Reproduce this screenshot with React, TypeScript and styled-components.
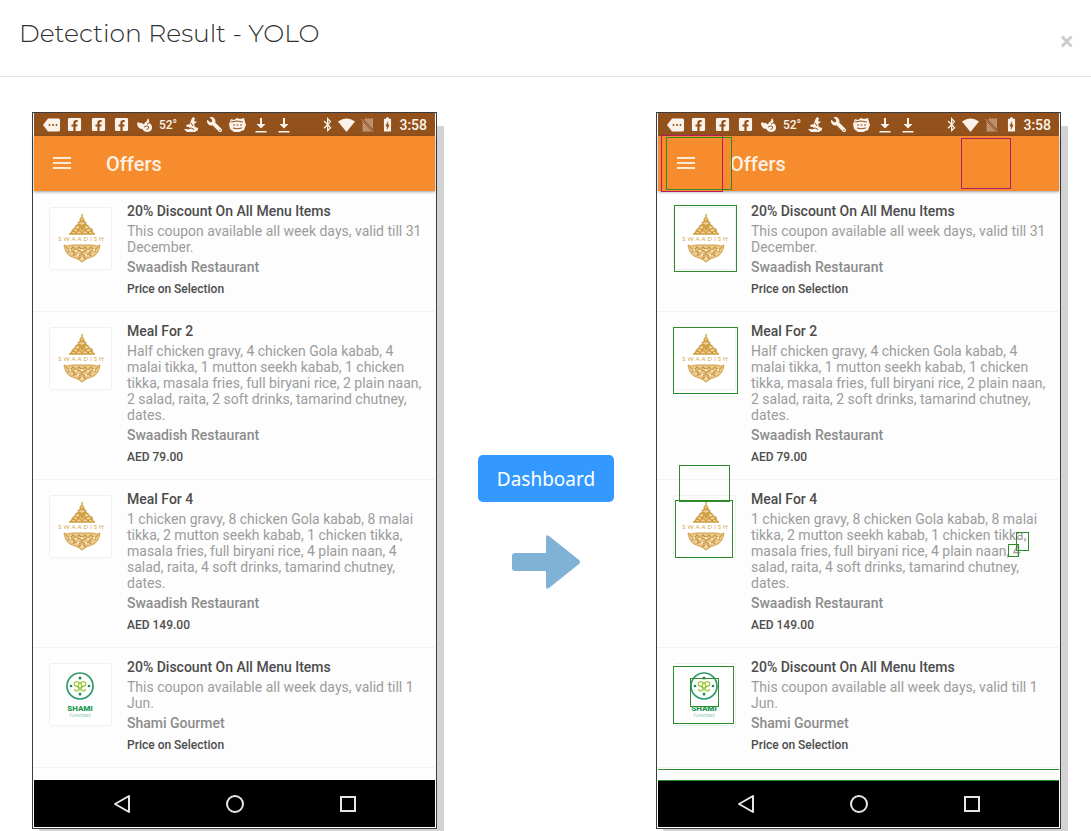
import React from "react";
import styled, { createGlobalStyle } from "styled-components";
import { FaBluetoothB, FaFacebookSquare, FaWrench } from "react-icons/fa";
import { MdBatteryChargingFull } from "react-icons/md";

const GlobalStyle = createGlobalStyle`
  *, *::before, *::after { box-sizing: border-box; }
  body { margin: 0; background: #fff; }
  h1, h2, h3, p, ul { margin: 0; padding: 0; }
`;

const Page = styled.div`
  min-height: 100vh;
  background: #fff;
`;

const DialogHeader = styled.header`
  display: flex;
  justify-content: space-between;
  align-items: flex-start;
  padding: 16px 17px 0 19px;
  height: 77px;
  border-bottom: 1px solid #e5e5e5;
`;

const DialogTitle = styled.h1`
  font: 300 25px/35px Montserrat, Inter, sans-serif;
  color: #303030;
`;

const CloseButton = styled.button`
  margin-top: 14px;
  padding: 0;
  border: 0;
  background: none;
  font: 700 26px/22px "Open Sans", sans-serif;
  color: #cccccc;
  cursor: pointer;
`;

const Comparison = styled.main`
  display: grid;
  grid-template-columns: minmax(0, 405px) minmax(137px, 1fr) minmax(0, 405px);
  align-items: start;
  padding: 35px 30px 0 32px;
`;

const Middle = styled.div`
  display: flex;
  flex-direction: column;
  align-items: center;
  gap: 33px;
  padding: 343px 1px 0 0;
`;

const DashboardButton = styled.button`
  height: 47px;
  padding: 0 19px;
  border: 0;
  border-radius: 5px;
  background: #3399ff;
  color: #fff;
  font: 400 19px/28px "Noto Sans", "Open Sans", sans-serif;
  cursor: pointer;
`;

const Frame = styled.section`
  padding: 0 1px 1px;
  border: 1px solid #3c3c3c;
  background: #fff;
  box-shadow: 7px 14px 0 #d3d3d3;
  font-family: Roboto, sans-serif;
`;

const Screen = styled.div`
  position: relative;
  background: #fdfdfd;
`;

const StatusBar = styled.div`
  display: flex;
  justify-content: space-between;
  align-items: center;
  height: 23px;
  padding: 0 8px 0 6px;
  background: #93521c;
  color: #fbf3ea;
  svg { display: block; flex: none; }
`;

const Notifications = styled.div`
  display: grid;
  grid-template-columns: repeat(11, 1fr);
  place-items: center;
  flex: 0 1 256px;
`;

const StatusText = styled.span`
  font-size: 12px;
  font-weight: 500;
  line-height: 16px;
`;

const SystemIcons = styled.div`
  display: flex;
  align-items: center;
  gap: 3px;
`;

const Clock = styled.span`
  font-size: 14px;
  font-weight: 500;
  line-height: 16px;
`;

const AppBar = styled.div`
  position: relative;
  display: flex;
  align-items: center;
  gap: 35px;
  height: 55px;
  padding: 0 19px;
  background: #f68c2e;
  box-shadow: 0 1px 3px rgba(0, 0, 0, 0.35);
`;

const MenuButton = styled.button`
  display: block;
  padding: 0;
  border: 0;
  background: none;
  svg { display: block; }
`;

const AppTitle = styled.h2`
  font-size: 20px;
  font-weight: 500;
  line-height: 24px;
  color: #fdf0e2;
`;

const OfferList = styled.ul`
  list-style: none;
  padding-bottom: 12px;
`;

const OfferRow = styled.li`
  display: flex;
  align-items: flex-start;
  gap: 15px;
  padding: 11px 8px 14px 15px;
  border-top: 1px solid #f2f2f2;
  &:last-child { border-bottom: 1px solid #f2f2f2; }
`;

const Thumb = styled.div`
  flex: none;
  width: 63px;
  height: 63px;
  margin-top: 4px;
  border: 1px solid #f0f0f0;
  border-radius: 3px;
  background: #fff;
  svg { display: block; }
`;

const OfferText = styled.div`
  min-width: 0;
`;

const OfferTitle = styled.h3`
  font-size: 14px;
  font-weight: 500;
  line-height: 16px;
  color: #4c4c4c;
`;

const Description = styled.p`
  margin: 4px 0;
  font-size: 14px;
  line-height: 16px;
  color: #9c9c9c;
`;

const Restaurant = styled.p`
  font-size: 14px;
  font-weight: 500;
  line-height: 16px;
  color: #8c8c8c;
`;

const Price = styled.p`
  margin-top: 6px;
  font-size: 12px;
  font-weight: 500;
  line-height: 16px;
  color: #4c4c4c;
`;

const NavBar = styled.div`
  display: flex;
  justify-content: center;
  height: 47px;
  background: #000;
`;

const NavButton = styled.button`
  display: flex;
  align-items: center;
  justify-content: center;
  flex: 0 1 113px;
  padding: 0;
  border: 0;
  background: none;
  svg { display: block; }
`;

const boxColors = { green: "#2f8a2a", magenta: "#b51a62" };

const DetectionBox = styled.div<{
  $x: number;
  $y: number;
  $w: number;
  $h: number;
  $kind: keyof typeof boxColors;
}>`
  position: absolute;
  left: ${(p) => p.$x}px;
  top: ${(p) => p.$y}px;
  width: ${(p) => p.$w}px;
  height: ${(p) => p.$h}px;
  border: 1px solid ${(p) => boxColors[p.$kind]};
`;

const DetectionLine = styled.div<{ $y: number }>`
  position: absolute;
  left: 0;
  right: 0;
  top: ${(p) => p.$y}px;
  height: 1px;
  background: ${boxColors.green};
`;

type Logo = "swaadish" | "shami";

interface Offer {
  title: string;
  description: string;
  restaurant: string;
  price: string;
  logo: Logo;
}

const offers: Offer[] = [
  {
    title: "20% Discount On All Menu Items",
    description: "This coupon available all week days, valid till 31 December.",
    restaurant: "Swaadish Restaurant",
    price: "Price on Selection",
    logo: "swaadish",
  },
  {
    title: "Meal For 2",
    description:
      "Half chicken gravy, 4 chicken Gola kabab, 4 malai tikka, 1 mutton seekh kabab, 1 chicken tikka, masala fries, full biryani rice, 2 plain naan, 2 salad, raita, 2 soft drinks, tamarind chutney, dates.",
    restaurant: "Swaadish Restaurant",
    price: "AED 79.00",
    logo: "swaadish",
  },
  {
    title: "Meal For 4",
    description:
      "1 chicken gravy, 8 chicken Gola kabab, 8 malai tikka, 2 mutton seekh kabab, 1 chicken tikka, masala fries, full biryani rice, 4 plain naan, 4 salad, raita, 4 soft drinks, tamarind chutney, dates.",
    restaurant: "Swaadish Restaurant",
    price: "AED 149.00",
    logo: "swaadish",
  },
  {
    title: "20% Discount On All Menu Items",
    description: "This coupon available all week days, valid till 1 Jun.",
    restaurant: "Shami Gourmet",
    price: "Price on Selection",
    logo: "shami",
  },
];

const detections: { x: number; y: number; w: number; h: number; kind: keyof typeof boxColors }[] = [
  { x: 3, y: 22, w: 62, h: 57, kind: "magenta" },
  { x: 8, y: 24, w: 66, h: 53, kind: "green" },
  { x: 303, y: 25, w: 50, h: 51, kind: "magenta" },
  { x: 16, y: 92, w: 63, h: 67, kind: "green" },
  { x: 15, y: 214, w: 65, h: 67, kind: "green" },
  { x: 21, y: 352, w: 51, h: 37, kind: "green" },
  { x: 17, y: 387, w: 58, h: 58, kind: "green" },
  { x: 358, y: 419, w: 13, h: 19, kind: "green" },
  { x: 350, y: 431, w: 11, h: 13, kind: "green" },
  { x: 15, y: 553, w: 61, h: 58, kind: "green" },
  { x: 32, y: 565, w: 29, h: 29, kind: "green" },
];

const SwaadishLogo = () => (
  <svg width="61" height="61" viewBox="0 0 61 61" aria-label="Swaadish">
    <path d="M32 9l3 6l5 5l5 6H19l5-6l5-5z" fill="#eed3a2" />
    <g fill="none" stroke="#cf9c3c" strokeWidth="1.3">
      <path d="M32 6v4M30 12q2-5 4 0q-2 4-4 0" />
      <path d="M28 15q4-4 8 0q-4 5-8 0M25 19q3-4 7 0q4-4 7 0M22 23q3-5 6-1q4-5 8 0q4-4 7 1" />
      <path d="M19 26h26M21 25q3-4 5 0q3-5 6 0q3-5 6 0q3-4 5 0M29 18l3 4l3-4" />
    </g>
    <path
      d="M14 37q1 8 6 11q5 2 8 3q2 2 4 3q2-1 4-3q3-1 8-3q5-3 6-11q-4 2-7 0H21q-4 2-7 0z"
      fill="#e9c88f"
      stroke="#d3a349"
    />
    <g fill="none" stroke="#c58c2c" strokeWidth="1.1">
      <path d="M16 39q4 5 7 0q3 5 6 0q3 4 6 0q3 5 6 0q3 5 7 0M18 44q4-4 6 1q4-5 8 0q4-5 8 0q3-5 6-1M23 48q3-4 6 0q3-3 6 0q3-4 6 0M28 51q4-4 8 0" />
    </g>
    <g fill="#fffaf0">
      <circle cx="20" cy="42" r="1" />
      <circle cx="26" cy="43" r="1" />
      <circle cx="32" cy="42" r="1" />
      <circle cx="38" cy="43" r="1" />
      <circle cx="44" cy="42" r="1" />
      <circle cx="28" cy="47" r="1" />
      <circle cx="36" cy="47" r="1" />
      <circle cx="32" cy="50" r="1" />
    </g>
    <text
      x="32"
      y="33"
      textAnchor="middle"
      fill="#cfa050"
      fontFamily="Lato, sans-serif"
      fontSize="6"
      letterSpacing="2"
    >
      SWAADISH
    </text>
  </svg>
);

const ShamiLogo = () => (
  <svg width="61" height="61" viewBox="0 0 61 61" aria-label="Shami Gourmet">
    <circle cx="30" cy="22" r="13" fill="#fff" stroke="#2f9a6a" strokeWidth="1.7" />
    <g fill="none" stroke="#9bc93f" strokeWidth="1.4" strokeLinecap="round">
      <path d="M29 18.500q-3.500-2-4.500 .5t2.500 3.500t1.500 3.500t-4-.5" />
      <path d="M31 18.500q3.500-2 4.500 .5t-2.500 3.500t-1.500 3.500t4-.5" />
      <path d="M30 18.500q-3.500 3.500 0 7q3.500-3.500 0-7" />
    </g>
    <g fill="#1f8a5a">
      <circle cx="30" cy="14" r="1.500" />
      <circle cx="30" cy="30" r="1.500" />
      <circle cx="21" cy="22" r="1.300" />
      <circle cx="39" cy="22" r="1.300" />
    </g>
    <text
      x="30"
      y="47"
      textAnchor="middle"
      fill="#249a57"
      fontFamily="Roboto, sans-serif"
      fontWeight="900"
      fontSize="8"
    >
      SHAMI
    </text>
    <text
      x="30"
      y="53"
      textAnchor="middle"
      fill="#7cc29c"
      fontFamily="'Liberation Serif', serif"
      fontStyle="italic"
      fontSize="6"
    >
      Gourmet
    </text>
  </svg>
);

const MessageIcon = () => (
  <svg width="17" height="14" viewBox="0 0 17 14">
    <path d="M5 0.5h10.5q1.5 0 1.5 1.5v10q0 1.5-1.5 1.5H5L0 7z" fill="currentColor" />
    <g fill="#93521c">
      <circle cx="6.5" cy="7" r="1" />
      <circle cx="10" cy="7" r="1" />
      <circle cx="13.5" cy="7" r="1" />
    </g>
  </svg>
);

const BirdIcon = () => (
  <svg width="15" height="14" viewBox="0 0 15 14">
    <path
      d="M0 5q2-1.500 3 .5q1-1.500 2.500 0l1.500 1q0-2 3-3.500l1-3q2 2 1 5q3 1 3 4.500q0 4-4.500 4.500q-4 0-5-3q-5 0-5.500-6z"
      fill="currentColor"
    />
    <path d="M7 9q3-2 4.500-.5t-2 3M10 6l2-1" stroke="#93521c" fill="none" />
  </svg>
);

const SkierIcon = () => (
  <svg width="15" height="15" viewBox="0 0 15 15">
    <path
      d="M9 0l2 1l-1 3l3 1l-3 2l1 3l3 1v2l-3 2H3l-3-3l4 0l2-2l-3 0l-1-2l4-1l1-4z"
      fill="currentColor"
    />
    <path d="M3 12l5-1l2 2M7 6l2 3" stroke="#93521c" fill="none" />
  </svg>
);

const FaceIcon = () => (
  <svg width="17" height="15" viewBox="0 0 17 15">
    <path
      d="M2 2l3 1l3-2l3 1l4-1l1 4l1 3l-2 5l-5 2H5l-4-3L0 7l1-2z"
      fill="currentColor"
    />
    <path d="M2 5q6-2 12 0M4 8h2M7.500 8h2M11 8h2M4 11q4 1.500 9 0" stroke="#93521c" fill="none" />
  </svg>
);

const DownloadIcon = () => (
  <svg width="12" height="16" viewBox="0 0 12 16" fill="currentColor">
    <path d="M5 1h2v6h3.500L6 11.500L1.500 7H5zM0.500 14h11v1.500H0.500z" />
  </svg>
);

const WifiIcon = () => (
  <svg width="17" height="14" viewBox="0 0 17 14">
    <path d="M0 3.500Q8.500-2.500 17 3.500L8.500 14z" fill="currentColor" />
  </svg>
);

const NoSimIcon = () => (
  <svg width="18" height="14" viewBox="-3 0 18 14" opacity="0.4">
    <path d="M4 .5h8v13H1.500V4z" fill="currentColor" />
    <path d="M.5 1l12 12.500" stroke="#93521c" strokeWidth="2.500" />
    <path d="M0 1l12.500 13" stroke="currentColor" strokeWidth="1" />
  </svg>
);

const Phone = ({ label, children }: { label: string; children?: React.ReactNode }) => (
  <Frame aria-label={label}>
    <Screen>
      <StatusBar>
        <Notifications>
          <MessageIcon />
          <FaFacebookSquare size={15} />
          <FaFacebookSquare size={15} />
          <FaFacebookSquare size={15} />
          <BirdIcon />
          <StatusText>52°</StatusText>
          <SkierIcon />
          <FaWrench size={15} transform="scale(-1 1)" />
          <FaceIcon />
          <DownloadIcon />
          <DownloadIcon />
        </Notifications>
        <SystemIcons>
          <FaBluetoothB size={15} />
          <WifiIcon />
          <NoSimIcon />
          <MdBatteryChargingFull size={17} />
          <Clock>3:58</Clock>
        </SystemIcons>
      </StatusBar>
      <AppBar>
        <MenuButton aria-label="Menu">
          <svg width="18" height="14" viewBox="0 0 18 14" fill="#fdebd8">
            <path d="M0 0h18v2H0zM0 5h18v2H0zM0 10h18v2H0z" />
          </svg>
        </MenuButton>
        <AppTitle>Offers</AppTitle>
      </AppBar>
      <OfferList>
        {offers.map((offer, i) => (
          <OfferRow key={i}>
            <Thumb>{offer.logo === "swaadish" ? <SwaadishLogo /> : <ShamiLogo />}</Thumb>
            <OfferText>
              <OfferTitle>{offer.title}</OfferTitle>
              <Description>{offer.description}</Description>
              <Restaurant>{offer.restaurant}</Restaurant>
              <Price>{offer.price}</Price>
            </OfferText>
          </OfferRow>
        ))}
      </OfferList>
      <NavBar>
        <NavButton aria-label="Back">
          <svg width="18" height="20" viewBox="0 0 18 20">
            <path d="M16 2v16L2 10z" fill="none" stroke="#e6e6e6" strokeWidth="2" strokeLinejoin="round" />
          </svg>
        </NavButton>
        <NavButton aria-label="Home">
          <svg width="20" height="20" viewBox="0 0 20 20">
            <circle cx="10" cy="10" r="8" fill="none" stroke="#e6e6e6" strokeWidth="2" />
          </svg>
        </NavButton>
        <NavButton aria-label="Recent apps">
          <svg width="18" height="18" viewBox="0 0 18 18">
            <rect x="2" y="2" width="14" height="14" fill="none" stroke="#e6e6e6" strokeWidth="2" />
          </svg>
        </NavButton>
      </NavBar>
      {children}
    </Screen>
  </Frame>
);

export default function App() {
  return (
    <Page>
      <GlobalStyle />
      <DialogHeader>
        <DialogTitle>Detection Result - YOLO</DialogTitle>
        <CloseButton aria-label="Close">×</CloseButton>
      </DialogHeader>
      <Comparison>
        <Phone label="Original screen" />
        <Middle>
          <DashboardButton>Dashboard</DashboardButton>
          <svg width="68" height="54" viewBox="0 0 68 54" fill="#7fb2d5">
            <path d="M3 18H34V2q0-3 3-1L67 25q2 2 0 4L37 53q-3 2-3-1V36H3q-3 0-3-3V21q0-3 3-3z" />
          </svg>
        </Middle>
        <Phone label="Detected elements">
          {detections.map((d, i) => (
            <DetectionBox key={i} $x={d.x} $y={d.y} $w={d.w} $h={d.h} $kind={d.kind} />
          ))}
          <DetectionLine $y={656} />
          <DetectionLine $y={667} />
        </Phone>
      </Comparison>
    </Page>
  );
}
